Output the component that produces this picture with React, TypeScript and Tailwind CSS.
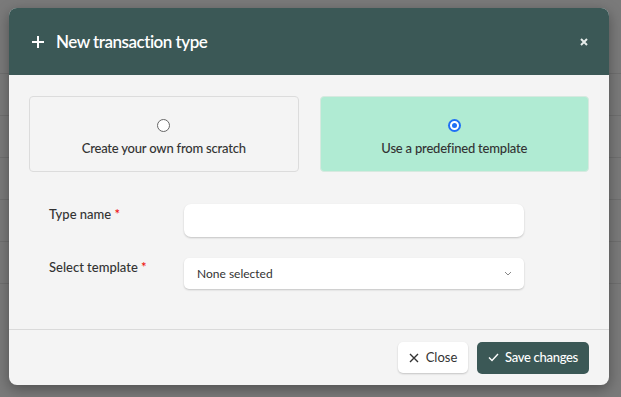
import React from "react";

const font = { fontFamily: "Lato, 'Open Sans', sans-serif" };

const Row = () => <div className="h-[42px] border-b border-[#6f6f6f]" />;

export default function App() {
  return (
    <div className="relative h-[397px] w-[621px] overflow-hidden bg-[#7a7a7a]" style={font}>
      {/* background table rows behind the overlay */}
      <div className="pt-[32px]">
        <Row />
        <Row />
        <Row />
        <Row />
        <Row />
        <Row />
      </div>

      <div className="absolute left-[9px] top-[8px] w-[600px] overflow-hidden rounded-[8px] bg-[#f4f4f4] shadow-[0_4px_14px_rgba(0,0,0,0.35)]">
        {/* header */}
        <div className="flex h-[67px] items-center justify-between bg-[#3b5856] pl-[22px] pr-[21px] text-white">
          <div className="flex items-center gap-[11px]">
            <svg width="14" height="14" viewBox="0 0 14 14">
              <path d="M7 1v12M1 7h12" stroke="white" strokeWidth="2" />
            </svg>
            <span className="text-[17px] font-semibold tracking-[-0.5px]">New transaction type</span>
          </div>
          <svg width="8" height="8" viewBox="0 0 8 8">
            <path d="M1 1l6 6M7 1L1 7" stroke="#e6ecea" strokeWidth="2" />
          </svg>
        </div>

        {/* body */}
        <div className="px-[20px] pt-[21px]">
          <div className="grid grid-cols-2 gap-[21px]">
            <div className="flex h-[76px] flex-col items-center gap-[8px] rounded-[4px] border border-[#dcdcdc] pt-[22px]">
              <span className="h-[13px] w-[13px] rounded-full border border-[#666] bg-white" />
              <span className="text-[13px] leading-[16px] font-medium tracking-[-0.2px] text-[#333]">Create your own from scratch</span>
            </div>
            <div className="flex h-[76px] flex-col items-center gap-[8px] rounded-[4px] border border-[#d6e9df] bg-[#b0ebd3] pt-[22px]">
              <span className="flex h-[13px] w-[13px] items-center justify-center rounded-full bg-[#1f6ff5]">
                <span className="h-[9px] w-[9px] rounded-full border-2 border-white bg-[#1f6ff5]" />
              </span>
              <span className="text-[13px] leading-[16px] font-medium tracking-[-0.2px] text-[#333]">Use a predefined template</span>
            </div>
          </div>

          <div className="mt-[32px] flex flex-col gap-[20px] pl-[20px] pr-[65px]">
            <div className="flex items-start">
              <label className="w-[135px] pt-[1px] text-[13px] font-medium text-[#333]">
                Type name <span className="text-[#e00]">*</span>
              </label>
              <div className="h-[33px] flex-1 rounded-[7px] bg-white shadow-[0_1px_2px_rgba(0,0,0,0.2)]" />
            </div>
            <div className="flex items-start">
              <label className="w-[135px] pt-[1px] text-[13px] font-medium text-[#333]">
                Select template <span className="text-[#e00]">*</span>
              </label>
              <div className="mt-[1px] flex h-[31px] flex-1 items-center justify-between rounded-[5px] bg-white pl-[13px] pr-[12px] shadow-[0_1px_2px_rgba(0,0,0,0.2)]">
                <span className="text-[12px] text-[#333]">None selected</span>
                <svg width="8" height="5" viewBox="0 0 8 5">
                  <path d="M1 1l3 3 3-3" stroke="#888" strokeWidth="1" fill="none" />
                </svg>
              </div>
            </div>
          </div>
        </div>

        {/* footer */}
        <div className="mt-[40px] flex h-[56px] items-center justify-end gap-[9px] border-t border-[#dadada] px-[20px]">
          <button className="flex h-[31px] w-[70px] items-center justify-center gap-[7px] rounded-[5px] bg-white text-[13px] text-[#333] shadow-[0_1px_2px_rgba(0,0,0,0.2)]">
            <svg width="10" height="10" viewBox="0 0 10 10">
              <path d="M1 1l8 8M9 1L1 9" stroke="#333" strokeWidth="1.4" />
            </svg>
            Close
          </button>
          <button className="flex h-[32px] w-[112px] items-center justify-center gap-[6px] rounded-[5px] bg-[#3b5856] text-[13px] font-medium tracking-[-0.3px] text-white">
            <svg width="11" height="9" viewBox="0 0 11 9">
              <path d="M1 4.5l3 3L10 1" stroke="white" strokeWidth="1.4" fill="none" />
            </svg>
            Save changes
          </button>
        </div>
      </div>
    </div>
  );
}
